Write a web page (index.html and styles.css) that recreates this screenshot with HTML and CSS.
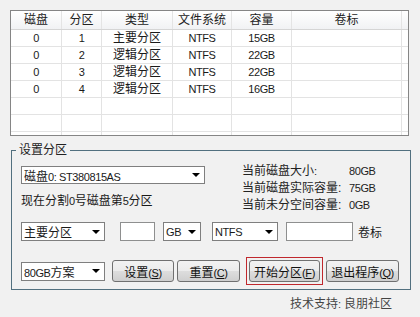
FILE: index.html
```html
<!DOCTYPE html>
<html>
<head>
  <meta charset="UTF-8">
  <title>分区工具</title>
  <link rel="stylesheet" href="styles.css">
</head>
<body>
  <div class="list">
    <div class="row head">
      <div>磁盘</div><div>分区</div><div>类型</div><div>文件系统</div><div>容量</div><div>卷标</div><div></div>
    </div>
    <div class="row n"><div>0</div><div>1</div><div class="cn">主要分区</div><div>NTFS</div><div>15GB</div><div></div><div></div></div>
    <div class="row n"><div>0</div><div>2</div><div class="cn">逻辑分区</div><div>NTFS</div><div>22GB</div><div></div><div></div></div>
    <div class="row n"><div>0</div><div>3</div><div class="cn">逻辑分区</div><div>NTFS</div><div>22GB</div><div></div><div></div></div>
    <div class="row n"><div>0</div><div>4</div><div class="cn">逻辑分区</div><div>NTFS</div><div>16GB</div><div></div><div></div></div>
    <div class="row"><div></div><div></div><div></div><div></div><div></div><div></div><div></div></div>
    <div class="row"><div></div><div></div><div></div><div></div><div></div><div></div><div></div></div>
    <div class="row"><div></div><div></div><div></div><div></div><div></div><div></div><div></div></div>
  </div>

  <fieldset class="group">
    <legend>设置分区</legend>
    <div class="top">
      <div class="left">
        <div class="combo disk"><span>磁盘<span class="n">0: ST380815AS</span></span><i class="arrow"></i></div>
        <div class="hint">现在分割<span class="n">0</span>号磁盘第<span class="n">5</span>分区</div>
      </div>
      <div class="info">
        <span>当前磁盘大小<span class="n">:</span></span><span class="n">80GB</span>
        <span>当前磁盘实际容量:</span><span class="n">75GB</span>
        <span>当前未分空间容量:</span><span class="n">0GB</span>
      </div>
    </div>

    <div class="line">
      <div class="combo type"><span>主要分区</span><i class="arrow"></i></div>
      <div class="edit size"></div>
      <div class="combo unit"><span class="n">GB</span><i class="arrow"></i></div>
      <div class="combo fs"><span class="n">NTFS</span><i class="arrow"></i></div>
      <div class="edit label"></div>
      <span class="label-text">卷标</span>
    </div>

    <div class="line actions">
      <div class="combo plan"><span><span class="n">80GB</span>方案</span><i class="arrow"></i></div>
      <button class="btn set">设置<span class="n">(<u>S</u>)</span></button>
      <button class="btn reset">重置<span class="n">(<u>C</u>)</span></button>
      <div class="focus"><button class="btn start">开始分区<span class="n">(<u>F</u>)</span></button></div>
      <button class="btn quit">退出程序<span class="n">(<u>Q</u>)</span></button>
    </div>
  </fieldset>

  <div class="footer">技术支持<span class="n">:</span> 良朋社区</div>
</body>
</html>
```

FILE: styles.css
```css
body {
  margin: 0;
  padding: 10px 0 0 10px;
  background: #f1f1f1;
  font-family: "Liberation Sans", "Noto Sans CJK SC", sans-serif;
  font-size: 12px;
  color: #1a1a1a;
}

/* latin runs are drawn a little smaller, like the dialog font */
.n {
  font-size: 11px;
  letter-spacing: -0.4px;
}
.n .cn {
  font-size: 12px;
  letter-spacing: 0;
}

/* partition list */
.list {
  width: 399px;
  height: 126px;
  box-sizing: border-box;
  border: 1px solid #858585;
  background: #fff;
  overflow: hidden;
}
.row {
  display: grid;
  grid-template-columns: 51px 40px 71px 59px 60px 110px 1fr;
  height: 17px;
  box-sizing: border-box;
  border-bottom: 1px solid #e3e3e3;
  line-height: 16px;
}
.row div {
  border-right: 1px solid #e3e3e3;
  text-align: center;
  white-space: nowrap;
  overflow: hidden;
}
.row div:last-child { border-right: none; }
.row.head {
  height: 19px;
  line-height: 18px;
  background: linear-gradient(#ffffff, #f1f2f4);
  border-bottom: 1px solid #d5d5d5;
  color: #222;
}
.row.head div { border-right-color: #e4e4e4; }

/* settings group */
.group {
  width: 400px;
  height: 147px;
  box-sizing: border-box;
  margin: 7px 0 0 1px;
  padding: 0 9px 0 9px;
  border: 1px solid #52707f;
}
.group legend {
  margin-left: -5px;
  padding: 0 3px;
  line-height: 14px;
  color: #222;
}

.top { display: flex; }
.left { width: 184px; }
.disk { margin-top: 9px; width: 184px; }
.hint {
  margin-top: 9px;
  height: 17px;
  line-height: 17px;
}
.info {
  margin: 6px 0 0 37px;
  display: grid;
  grid-template-columns: 107px auto;
  line-height: 17px;
  color: #222;
}

.combo {
  display: flex;
  align-items: center;
  height: 18px;
  box-sizing: border-box;
  border: 1px solid #7f7f7f;
  background: #fff;
  padding-left: 2px;
  white-space: nowrap;
}
.combo > span { flex: 1; }
.arrow {
  width: 0;
  height: 0;
  margin-right: 4px;
  border-left: 4px solid transparent;
  border-right: 4px solid transparent;
  border-top: 4px solid #000;
}
.edit {
  height: 19px;
  box-sizing: border-box;
  border: 1px solid #8e8f8f;
  background: #fff;
}

.line {
  display: flex;
  align-items: center;
  margin-top: 8px;
}
.line .combo { height: 19px; }
.type { width: 84px; }
.size { width: 35px; margin-left: 15px; }
.unit { width: 38px; margin-left: 8px; }
.fs { width: 66px; margin-left: 11px; }
.label { width: 67px; margin-left: 8px; }
.label-text { margin-left: 5px; }

.actions { margin-top: 16px; }
.plan { width: 84px; }
.btn {
  height: 22px;
  padding: 0;
  border: 1px solid #707070;
  border-radius: 3px;
  background: linear-gradient(#f2f2f2 0%, #ebebeb 50%, #dddddd 51%, #cfcfcf 100%);
  font-family: inherit;
  font-size: 12px;
  color: #111;
}
.set { width: 62px; margin-left: 7px; }
.reset { width: 63px; margin-left: 3px; }
.focus {
  margin-left: 6px;
  padding: 2px;
  border: 1px solid #c0282d;
  display: flex;
}
.start { width: 71px; }
.quit { width: 73px; margin-left: 3px; }

.footer {
  margin-top: 6px;
  padding-right: 28px;
  text-align: right;
  line-height: 17px;
  color: #444;
}
```
